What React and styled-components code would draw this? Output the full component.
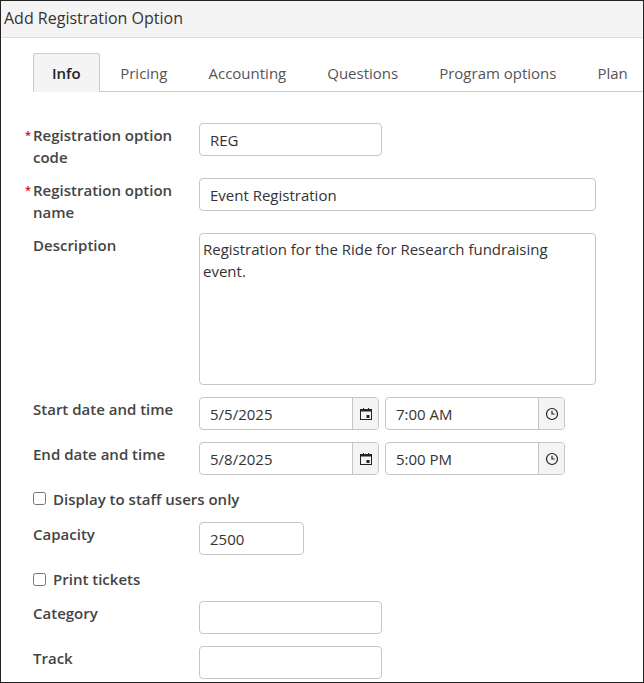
import React from 'react';
import styled, { createGlobalStyle } from 'styled-components';

const Global = createGlobalStyle`
  html, body { margin: 0; background: #fff; }
  body { font-family: "Open Sans", "Noto Sans", sans-serif; color: #333; }
  * { box-sizing: border-box; }
`;

const Frame = styled.div`
  width: 644px;
  height: 683px;
  border: 1px solid #222;
  overflow: hidden;
`;

const Header = styled.div`
  height: 37px;
  background: #f4f4f4;
  border-bottom: 1px solid #ddd;
  padding: 6px 3px;
  font-size: 16px;
  color: #333;
`;

const Tabs = styled.div`
  display: flex;
  margin: 15px 0 0 32px;
  border-bottom: 1px solid #ccc;
  height: 39px;
`;

const Tab = styled.div`
  height: 39px;
  padding: 0 ${p => p.$pad || 19.5}px;
  display: flex;
  align-items: center;
  font-size: 15px;
  color: ${p => (p.$active ? '#222' : '#555')};
  font-weight: ${p => (p.$active ? 600 : 400)};
  background: ${p => (p.$active ? '#f4f4f4' : 'transparent')};
  border: 1px solid ${p => (p.$active ? '#ccc' : 'transparent')};
  border-bottom: none;
  border-radius: 3px 3px 0 0;
  white-space: nowrap;
`;

const Form = styled.div`
  padding: 31px 0 0 32px;
`;

const Row = styled.div`
  display: flex;
  height: ${p => p.$h}px;
`;

const Label = styled.div`
  position: relative;
  width: 166px;
  font-size: 15px;
  font-weight: 600;
  color: #444;
  line-height: 22px;
  padding-top: 1px;
`;

const Star = styled.span`
  position: absolute;
  left: -8px;
  top: 1px;
  color: #d00;
  font-size: 11px;
`;

const Input = styled.div`
  width: ${p => p.$w}px;
  height: ${p => p.$h || 33}px;
  border: 1px solid #c6c6c6;
  border-radius: 4px;
  padding: ${p => (p.$area ? '4px 3px' : '0 10px')};
  display: flex;
  align-items: ${p => (p.$area ? 'flex-start' : 'center')};
  font-size: 15px;
  color: #333;
  line-height: 22px;
  background: #fff;
`;

const Group = styled.div`
  width: 180px;
  height: 33px;
  border: 1px solid #c6c6c6;
  border-radius: 4px;
  display: flex;
  margin-right: 6px;
  overflow: hidden;
`;

const GroupText = styled.div`
  flex: 1;
  padding: 0 10px;
  display: flex;
  align-items: center;
  font-size: 15px;
`;

const Addon = styled.div`
  width: 26px;
  background: #f4f4f4;
  border-left: 1px solid #c6c6c6;
  display: flex;
  align-items: center;
  justify-content: center;
`;

const Check = styled.label`
  display: flex;
  align-items: center;
  gap: 7px;
  height: ${p => p.$h}px;
  padding-bottom: 10px;
  font-size: 15px;
  font-weight: 600;
  color: #444;
  input { margin: 0; width: 13px; height: 13px; }
`;

const Cal = () => (
  <svg width="14" height="14" viewBox="0 0 14 14">
    <rect x="1.5" y="2.5" width="11" height="10" fill="none" stroke="#222" />
    <rect x="1.5" y="2.5" width="11" height="2" fill="#222" />
    <rect x="4" y="1" width="1" height="2" fill="#222" />
    <rect x="9" y="1" width="1" height="2" fill="#222" />
    <rect x="7.5" y="8" width="3" height="3" fill="#222" />
  </svg>
);

const Clock = () => (
  <svg width="14" height="14" viewBox="0 0 14 14">
    <circle cx="7" cy="7" r="5.5" fill="none" stroke="#222" strokeWidth="1.2" />
    <path d="M7 3.8V7h2.6" fill="none" stroke="#222" strokeWidth="1.2" />
  </svg>
);

export default function App() {
  return (
    <Frame>
      <Global />
      <Header>Add Registration Option</Header>
      <Tabs>
        <Tab $active $pad={18}>Info</Tab>
        <Tab>Pricing</Tab>
        <Tab>Accounting</Tab>
        <Tab>Questions</Tab>
        <Tab>Program options</Tab>
        <Tab>Plan</Tab>
      </Tabs>
      <Form>
        <Row $h={55}>
          <Label><Star>*</Star>Registration option code</Label>
          <Input $w={183}>REG</Input>
        </Row>
        <Row $h={55}>
          <Label><Star>*</Star>Registration option name</Label>
          <Input $w={397}>Event Registration</Input>
        </Row>
        <Row $h={164}>
          <Label>Description</Label>
          <Input $w={397} $h={152} $area>Registration for the Ride for Research fundraising event.</Input>
        </Row>
        <Row $h={45}>
          <Label>Start date and time</Label>
          <Group><GroupText>5/5/2025</GroupText><Addon><Cal /></Addon></Group>
          <Group><GroupText>7:00 AM</GroupText><Addon><Clock /></Addon></Group>
        </Row>
        <Row $h={43}>
          <Label>End date and time</Label>
          <Group><GroupText>5/8/2025</GroupText><Addon><Cal /></Addon></Group>
          <Group><GroupText>5:00 PM</GroupText><Addon><Clock /></Addon></Group>
        </Row>
        <Check $h={37}><input type="checkbox" />Display to staff users only</Check>
        <Row $h={45}>
          <Label>Capacity</Label>
          <Input $w={105}>2500</Input>
        </Row>
        <Check $h={34}><input type="checkbox" />Print tickets</Check>
        <Row $h={45}>
          <Label>Category</Label>
          <Input $w={183} />
        </Row>
        <Row $h={45}>
          <Label>Track</Label>
          <Input $w={183} />
        </Row>
      </Form>
    </Frame>
  );
}
